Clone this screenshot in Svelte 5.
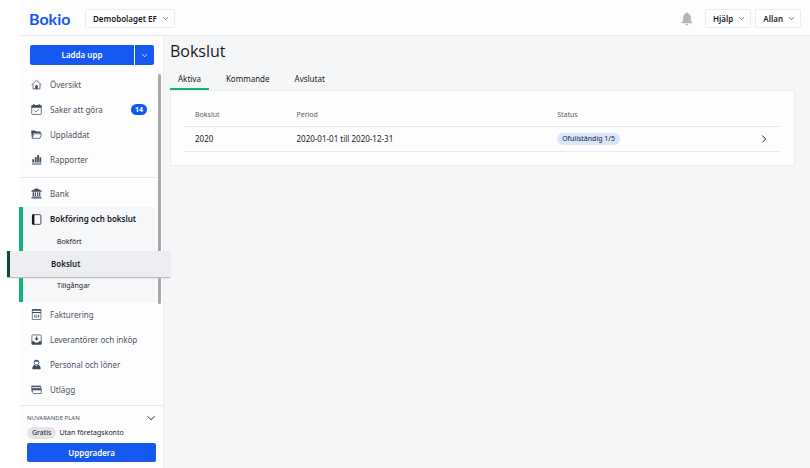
<script>
  const primary = [
    { icon: 'home', label: 'Översikt' },
    { icon: 'tasks', label: 'Saker att göra', count: 14 },
    { icon: 'folder', label: 'Uppladdat' },
    { icon: 'chart', label: 'Rapporter' }
  ];
  const secondary = [
    { icon: 'invoice', label: 'Fakturering' },
    { icon: 'inbox', label: 'Leverantörer och inköp' },
    { icon: 'person', label: 'Personal och löner' },
    { icon: 'card', label: 'Utlägg' }
  ];
  const tabs = ['Aktiva', 'Kommande', 'Avslutat'];
  let active = $state('Aktiva');
</script>

{#snippet chevron(cls)}
  <svg class="chev {cls}" viewBox="0 0 8 8" aria-hidden="true"><path d="M1.2 2.6 4 5.4l2.8-2.8" /></svg>
{/snippet}

{#snippet icon(name)}
  <svg class="icon" viewBox="0 0 12 12" aria-hidden="true">
    {#if name === 'home'}
      <path class="line" d="M.6 6.5 6 1.4l5.4 5.1M2.2 5.6v5.2h7.6V5.6" />
      <path d="M4.7 10.8V7.8a1.3 1.3 0 0 1 2.6 0v3z" />
    {:else if name === 'tasks'}
      <rect class="line" x=".8" y="1.6" width="10.4" height="9.8" rx=".8" />
      <path d="M.6 1.4h10.8v2.6H.6zM2.4.2H4v2H2.4zM8 .2h1.6v2H8z" />
      <path class="line" d="m3.8 7.2 1.6 1.6L8.4 5.8" />
    {:else if name === 'folder'}
      <path class="line" d="M1.4 10.2.7 2.2h3.6l1 1.2h4.9v1.8M1.4 10.2 2.9 5.2h8.6l-1.6 5z" />
      <path d="M.4 1.8h4.1l1 1.3h4.9v1.3H2.5L1.2 9z" />
    {:else if name === 'chart'}
      <path d="M1.4 5.6h2v3.8h-2zM4.2 3.4h1.9v6H4.2zM6.7 1h1.9v8.4H6.7zM9.2 3.6h1.9v5.8H9.2zM1 10.4h10.4v1H1z" />
    {:else if name === 'bank'}
      <path d="M6 .4 11.6 3v1H.4V3zM1.8 4.5h1.4v4.3H1.8zM4.1 4.5h1.3v4.3H4.1zM6.6 4.5h1.3v4.3H6.6zM8.8 4.5h1.4v4.3H8.8zM1.2 9.2h9.6v.8H1.2zM.4 10.4h11.2v1.1H.4z" />
    {:else if name === 'book'}
      <rect class="line" x="2" y=".7" width="8.8" height="10.6" rx="1" />
      <path d="M1 1.2 2.2.2h1.5v11.6H2.2L1 10.8z" />
    {:else if name === 'invoice'}
      <rect class="line" x="1.4" y=".7" width="9.4" height="10.8" rx=".5" />
      <path d="M1.2.3H11v1.5H1.2zM1.2 3.4H11v1H1.2zM3.4 6.2H5v1H3.4zM5.6 6.2h1.2v1H5.6zM3.4 7.8H5v1.6H3.4zM5.6 7.8h1.2v1.6H5.6zM7.8 6.2h1v3.2h-1z" />
    {:else if name === 'inbox'}
      <rect class="line" x="1" y="1" width="10.2" height="10.2" rx=".6" />
      <path d="M5.4 2.6h1.4v2.2h1.8L6.1 7.4 3.6 4.8h1.8zM.8 8h2.6l1 1.2h3.4L8.8 8h2.6v3.4H.8z" />
    {:else if name === 'person'}
      <circle class="line" cx="6" cy="3.8" r="2.6" />
      <path d="M3.4 3.6a2.6 2.6 0 0 1 5.2 0L6 2.6zM1.4 11.2c0-3.2 1.6-4.6 2.8-4.8L6 7.8l1.8-1.4c1.2.2 2.8 1.6 2.8 4.8z" />
    {:else}
      <path class="line" d="M.8 2.6h9.8v1.6M.8 2.6v5.2l.8.8M1.6 4.6h9.6v5.8H2.6l-1-1z" />
      <path d="M.6 1.8h10v1.2H.6zM1.6 5h9.6v1.8H1.6z" />
    {/if}
  </svg>
{/snippet}

{#snippet item(entry)}
  <a class="item" href="#{entry.icon}">
    {@render icon(entry.icon)}
    <span>{entry.label}</span>
    {#if entry.count}<span class="count">{entry.count}</span>{/if}
  </a>
{/snippet}

<div class="app">
  <header>
    <a class="logo" href="#start">Bokio</a>
    <button class="menu">Demobolaget EF {@render chevron('')}</button>
    <div class="tools">
      <button class="bell" aria-label="Aviseringar">
        <svg viewBox="0 0 12 14" aria-hidden="true">
          <path d="M6 .4c.7 0 1.1.5 1.1 1.2 1.8.5 2.8 2 2.8 3.9v3.2l1.5 1.7v.8H.6v-.8l1.5-1.7V5.5c0-1.9 1-3.4 2.8-3.9C4.9.9 5.3.4 6 .4zM4.5 11.9h3c0 .9-.6 1.5-1.5 1.5s-1.5-.6-1.5-1.5z" />
        </svg>
      </button>
      <button class="menu">Hjälp {@render chevron('')}</button>
      <button class="menu">Allan {@render chevron('')}</button>
    </div>
  </header>

  <div class="body">
    <aside>
      <div class="upload">
        <button class="blue">Ladda upp</button>
        <button class="blue more" aria-label="Fler val">{@render chevron('')}</button>
      </div>
      <nav>
        {#each primary as entry}{@render item(entry)}{/each}
        <hr />
        {@render item({ icon: 'bank', label: 'Bank' })}
        <div class="group">
          <a class="item current" href="#bokforing">{@render icon('book')}<span>Bokföring och bokslut</span></a>
          <a class="sub" href="#bokfort">Bokfört</a>
          <a class="sub raised" href="#bokslut">Bokslut</a>
          <a class="sub" href="#tillgangar">Tillgångar</a>
        </div>
        {#each secondary as entry}{@render item(entry)}{/each}
        <div class="thumb"></div>
      </nav>
      <section class="plan">
        <button class="planhead">NUVARANDE PLAN {@render chevron('big')}</button>
        <p><span class="pill">Gratis</span>Utan företagskonto</p>
        <button class="blue">Uppgradera</button>
      </section>
    </aside>

    <main>
      <h1>Bokslut</h1>
      <div class="tabs" role="tablist">
        {#each tabs as tab}
          <button role="tab" aria-selected={active === tab} onclick={() => (active = tab)}>{tab}</button>
        {/each}
      </div>
      <div class="panel">
        <table>
          <thead>
            <tr><th class="c1">Bokslut</th><th class="c2">Period</th><th>Status</th><th class="c4" aria-label="Öppna"></th></tr>
          </thead>
          <tbody>
            <tr>
              <td>2020</td>
              <td>2020-01-01 till 2020-12-31</td>
              <td><span class="status">Ofullständig 1/5</span></td>
              <td><a class="open" href="#2020" aria-label="Öppna 2020">{@render chevron('big right')}</a></td>
            </tr>
          </tbody>
        </table>
      </div>
    </main>
  </div>
</div>

<style>
  :global(body) { background: #fff; }
  .app, .app :global(*) { box-sizing: border-box; }
  .app {
    display: flex;
    flex-direction: column;
    min-height: 100vh;
    margin-left: 20px;
    font: 8px/12px "Noto Sans", "Open Sans", sans-serif;
    color: #17191d;
  }
  a { color: inherit; text-decoration: none; }
  button {
    margin: 0;
    padding: 0;
    border: 0;
    background: none;
    font: inherit;
    color: inherit;
    cursor: pointer;
  }
  svg { display: block; flex: none; }

  header {
    display: flex;
    align-items: center;
    height: 36px;
    padding: 2px 9px 0 9px;
    background: #fdfdfd;
    border-bottom: 1px solid #e8eaec;
  }
  .logo {
    width: 56px;
    font: 700 16px/20px Lato, sans-serif;
    color: #1457f0;
  }
  .menu {
    display: flex;
    align-items: center;
    gap: 5px;
    height: 19px;
    padding: 0 5px 0 7px;
    border: 1px solid #ebecef;
    border-radius: 2px;
    background: #fff;
    font-weight: 600;
  }
  .tools { display: flex; align-items: center; gap: 4px; margin-left: auto; }
  .bell { margin-right: 8px; }
  .bell svg { width: 12px; height: 14px; fill: #b0b7bd; }
  .chev { width: 7px; height: 7px; fill: none; stroke: #5d6470; stroke-width: 1; }
  .big { width: 10px; height: 10px; stroke: #25282d; stroke-width: .8; }
  .right { transform: rotate(-90deg); }

  .body { display: flex; flex: 1; }
  aside {
    display: flex;
    flex-direction: column;
    flex: none;
    width: 144px;
    background: #fdfdfd;
    border-right: 1px solid #ebecef;
  }
  .blue {
    height: 19px;
    border-radius: 2px;
    background: #1559f0;
    color: #fff;
    font-weight: 600;
  }
  .upload { display: flex; gap: 1px; padding: 9px 9px 7px 10px; }
  .upload .blue { flex: 1; height: 20px; border-radius: 2px 0 0 2px; }
  .upload .more {
    display: flex;
    flex: none;
    align-items: center;
    justify-content: center;
    width: 19px;
    border-radius: 0 2px 2px 0;
  }
  .more :global(.chev) { stroke: #fff; }

  nav { position: relative; display: flex; flex-direction: column; }
  .item {
    display: flex;
    align-items: center;
    gap: 8px;
    height: 25px;
    padding: 0 16px 0 11px;
    color: #46535f;
    white-space: nowrap;
  }
  .icon { width: 11px; height: 11px; fill: #3c4b5b; }
  .icon .line { fill: none; stroke: #3c4b5b; stroke-width: .8; }
  .count {
    width: 16px;
    height: 11px;
    margin-left: auto;
    border-radius: 6px;
    background: #1157f3;
    color: #fff;
    font-size: 7px;
    font-weight: 700;
    line-height: 11px;
    text-align: center;
  }
  hr { width: 137px; height: 1px; margin: 5px 0 3px; border: 0; background: #e6e8eb; }
  .group {
    display: flex;
    flex-direction: column;
    width: 137px;
    margin: 1px 0 0 -1px;
    padding-bottom: 5px;
    border-left: 4px solid #10b571;
    background: #f6f7f9;
  }
  .current { height: 24px; padding: 0 0 0 8px; color: #15171a; font-weight: 600; }
  .current .icon { fill: #15171a; }
  .current .icon .line { stroke: #15171a; }
  .sub { height: 22px; padding-left: 34px; font-size: 7px; line-height: 22px; }
  .raised {
    z-index: 1;
    width: 163px;
    height: 26px;
    margin: -2px 0 -2px -16px;
    padding-left: 41px;
    border-left: 3px solid #11493a;
    background: #edeef1;
    box-shadow: 0 1px 1px #b9bbbf;
    font-size: 8px;
    font-weight: 600;
    line-height: 26px;
  }
  .thumb {
    position: absolute;
    top: 2px;
    left: 138px;
    width: 3px;
    height: 230px;
    border-radius: 2px;
    background: #a5a7aa;
  }

  .plan {
    display: flex;
    flex-direction: column;
    margin-top: 3px;
    padding: 6px 7px 6px 7px;
    border-top: 1px solid #e6e8eb;
  }
  .planhead {
    display: flex;
    align-items: center;
    justify-content: space-between;
    height: 12px;
    font-size: 6px;
    color: #46535f;
  }
  p { display: flex; align-items: center; gap: 3px; margin: 3px 0 4px; font-size: 7px; }
  .pill { padding: 0 5px; border-radius: 6px; background: #e3e4e7; }

  main { flex: 1; min-width: 0; padding: 4px 15px 20px 6px; background: #f5f6f8; }
  h1 { margin: 0; font: 400 16px/22px "Open Sans", "Noto Sans", sans-serif; }
  .tabs { display: flex; gap: 9px; margin-top: 6px; }
  .tabs button {
    height: 22px;
    padding: 2px 8px 0;
    border-bottom: 2px solid transparent;
  }
  .tabs button[aria-selected='true'] { border-color: #15b276; }
  .panel { padding: 12px 13px 13px; border: 1px solid #ebecef; background: #fdfdfd; }
  table { width: 100%; border-collapse: collapse; table-layout: fixed; }
  th, td { height: 25px; padding: 0 0 0 11px; border-bottom: 1px solid #e8eaec; text-align: left; }
  th { height: 23px; padding-top: 2px; color: #56616d; font-size: 7px; font-weight: 400; }
  .c1 { width: 17%; }
  .c2 { width: 44%; }
  .c4 { width: 33px; }
  td:nth-child(3), th:nth-child(3) { padding-left: 9px; }
  .status {
    display: inline-block;
    padding: 0 5px;
    border-radius: 6px;
    background: #d8e6fc;
    font-size: 7px;
    line-height: 12px;
  }
  .open { display: block; width: 10px; }
</style>
